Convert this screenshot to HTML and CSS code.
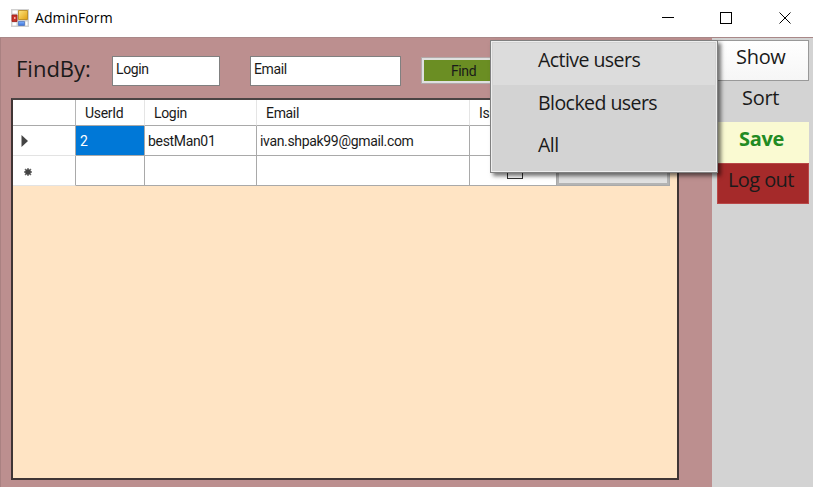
FILE: index.html
```html
<!DOCTYPE html>
<html lang="en">
<head>
<meta charset="utf-8">
<title>AdminForm</title>
<link rel="stylesheet" href="styles.css">
</head>
<body>
<div class="window">
  <header class="titlebar">
    <svg class="app-icon" width="18" height="18" viewBox="0 0 18 18">
      <defs>
        <linearGradient id="gold" x2="1" y2="1"><stop stop-color="#ffe680"/><stop offset="1" stop-color="#e0a010"/></linearGradient>
        <linearGradient id="blue" x2="0" y2="1"><stop stop-color="#80b4ff"/><stop offset="1" stop-color="#3a70d8"/></linearGradient>
      </defs>
      <path fill="#d0d0d0" d="M0 0h18v18H0z"/>
      <path fill="#fff" d="M1.500 1.500h5v3h-5zM1.500 13.500h4v3h-4zM14.500 12.500h2v4h-2z"/>
      <path fill="#c83228" stroke="#a02018" stroke-width=".8" d="M1 6h5v6.500H1z"/>
      <path fill="#f5b0a0" d="M3 8h1.500v2H3z"/>
      <path fill="url(#gold)" stroke="#b88618" stroke-width=".8" d="M7.500 1.500h9v9h-9z"/>
      <path fill="url(#blue)" stroke="#3c68b8" stroke-width=".6" d="M7.500 12.500h6v4h-6z"/>
    </svg>
    <span class="title">AdminForm</span>
    <svg class="controls" width="134" height="14" viewBox="0 0 134 14" fill="none" stroke="#000" shape-rendering="crispEdges">
      <path d="M2 6.500h12M60.500 1.500h11v11h-11z"/>
      <path shape-rendering="auto" d="M119.500 1.500l11 11M130.500 1.500l-11 11"/>
    </svg>
  </header>
  <div class="body">
    <main class="main">
      <div class="search">
        <span class="find-label">FindBy:</span>
        <div class="field login">Login</div>
        <div class="field email">Email</div>
        <div class="find-button">Find</div>
      </div>
      <div class="grid">
        <div class="row head">
          <div class="cell"></div><div class="cell">UserId</div><div class="cell">Login</div><div class="cell">Email</div><div class="cell">IsBlocked</div><div class="cell"></div>
        </div>
        <div class="row">
          <div class="cell mark"><svg width="8" height="12" viewBox="0 0 8 12"><path d="M.5 0L7 6 .5 12z" fill="#444"/></svg></div><div class="cell selected">2</div><div class="cell">bestMan01</div><div class="cell">ivan.shpak99@gmail.com</div><div class="cell"></div><div class="cell"></div>
        </div>
        <div class="row">
          <div class="cell mark star"><svg width="8" height="8" viewBox="0 0 8 8"><path d="M4 0v8M0 4h8M1 1l6 6M7 1L1 7" stroke="#666" stroke-width="1.400"/><circle cx="4" cy="4" r="2.800" fill="#444"/></svg></div><div class="cell"></div><div class="cell"></div><div class="cell"></div><div class="cell check"><i class="box"></i></div><div class="cell action"><i class="cell-button"></i></div>
        </div>
      </div>
    </main>
    <nav class="sidebar">
      <div class="item show">Show</div>
      <div class="item sort">Sort</div>
      <div class="item save">Save</div>
      <div class="item logout">Log out</div>
    </nav>
  </div>
  <div class="menu">
    <div class="option active">Active users</div>
    <div class="option blocked">Blocked users</div>
    <div class="option all">All</div>
  </div>
</div>
</body>
</html>
```
FILE: styles.css
```css
* { box-sizing: border-box; }
body { margin: 0; background: #fff; }
.window { position: relative; width: 813px; height: 487px; overflow: hidden; display: flex; flex-direction: column; font-family: "Open Sans", "Noto Sans", sans-serif; color: #1a1a1a; }
.titlebar { height: 37px; display: flex; align-items: center; padding: 0 19px 2px 11px; background: #fff; }
.title { margin-left: 6px; font-size: 14px; color: #000; letter-spacing: 0.1px; }
.controls { margin-left: auto; }
.body { flex: 1; display: flex; border-top: 1px solid #a98888; }
.main { width: 712px; background: #bc8f8f; border-left: 1px solid #a98181; padding-left: 10px; }
.search { height: 60px; display: flex; padding-top: 18px; }
.find-label { width: 101px; padding-left: 5px; font-size: 22px; line-height: 25px; letter-spacing: 0; white-space: nowrap; }
.field { height: 30px; border: 1px solid #808080; background: #fff; padding: 3px 0 0 3px; font: 14px/18px Roboto, "Liberation Sans", sans-serif; letter-spacing: -0.4px; }
.login { width: 108px; }
.email { width: 151px; margin-left: 30px; }
.find-button { width: 90px; height: 27px; margin: 1px 0 0 20px; border: 3px solid #dfe0df; outline: 1px solid #b3a9a9; outline-offset: -1px; background: #6b8e23; padding-left: 27px; font: 14px/22px Roboto, sans-serif; letter-spacing: -0.4px; }
.grid { width: 668px; height: 382px; border: 2px solid #403535; border-top-color: #4b4444; background: #ffe4c4; font: 14px/30px Roboto, "Liberation Sans", sans-serif; letter-spacing: -0.33px; }
.row { display: grid; grid-template-columns: 63px 69px 112px 213px 87px 113px; width: 657px; height: 30px; background: #fff; }
.cell { border-right: 1px solid #a9a9a9; border-bottom: 1px solid #a9a9a9; padding-left: 3px; overflow: hidden; white-space: nowrap; }
.head { height: 26px; line-height: 27px; }
.head .cell { border-right-color: #e5e5e5; padding-left: 9px; }
.head .cell:first-child { border-right-color: #b5b5b5; }
.mark { border-bottom-color: #e3e3e3; display: flex; align-items: center; padding-left: 8px; }
.star { padding-left: 11px; padding-top: 3px; }
.selected { background: #0078d7; color: #fff; padding-left: 4px; }
.check { display: flex; align-items: center; justify-content: center; }
.box { width: 16px; height: 16px; border: 1px solid #333; }
.action { padding: 0; }
.cell-button { display: block; height: 29px; border: 2px solid #b4b4b4; background: #e1e1e1; }
.sidebar { flex: 1; background: #d3d3d3; padding: 2px 4px 0 5px; font-size: 20px; line-height: 32px; letter-spacing: -0.3px; }
.item { height: 41px; padding-top: 1px; white-space: nowrap; }
.show { height: 41px; border: 1px solid #999; background: linear-gradient(#fff, #f6f6f6); padding: 0 0 0 18px; }
.sort { padding-left: 25px; }
.save { background: #fafad2; color: #228b22; font-weight: 700; padding-left: 22px; }
.logout { background: #a52a2a; border: 1px solid #b84848; padding: 0 0 0 10px; letter-spacing: -0.6px; }
.menu { position: absolute; left: 490px; top: 40px; width: 228px; height: 133px; background: #d3d3d3; border: 1px solid #808080; box-shadow: inset 0 0 0 1px #eee, 3px 3px 4px rgba(0,0,0,.55); padding: 2px; }
.option { height: 42px; padding-left: 45px; font-size: 19.5px; line-height: 33px; letter-spacing: -0.55px; white-space: nowrap; }
.blocked, .all { padding-top: 1px; }
.active { background: #dcdcdc; }
```
